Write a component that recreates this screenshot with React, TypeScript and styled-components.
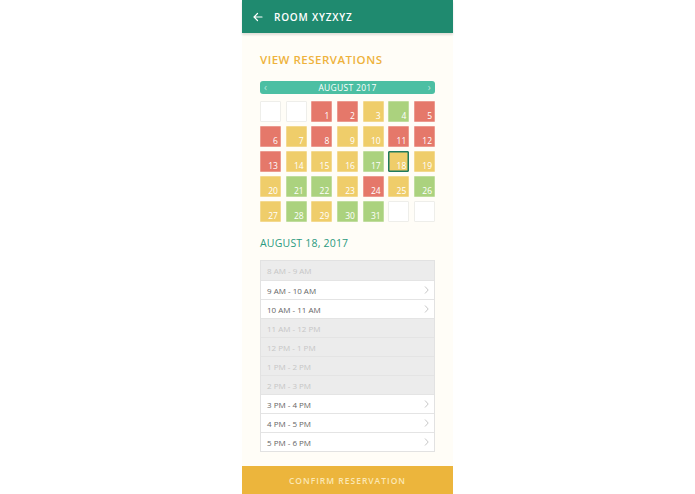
import styled, { createGlobalStyle } from 'styled-components';

const GlobalStyle = createGlobalStyle`
  html, body {
    margin: 0;
    padding: 0;
    background: #ffffff;
    font-family: "Open Sans", "Liberation Sans", sans-serif;
  }
`;

const Page = styled.div`
  display: flex;
  justify-content: center;
  width: 100%;
  height: 494px;
`;

const Phone = styled.div`
  width: 211px;
  height: 494px;
  background: #fffdf7;
  display: flex;
  flex-direction: column;
`;

const Header = styled.div`
  height: 33px;
  flex: none;
  background: #1f8a6f;
  box-shadow: 0 2px 2px rgba(0, 0, 0, 0.12);
  display: flex;
  align-items: center;
  padding-left: 10px;
  gap: 10px;
  color: #ffffff;
`;

const HeaderTitle = styled.span`
  font-size: 10px;
  font-weight: 600;
  letter-spacing: 0.8px;
`;

const Content = styled.div`
  flex: 1;
  padding: 19px 18px 0;
  display: flex;
  flex-direction: column;
`;

const Title = styled.div`
  color: #eeb23c;
  font-size: 11.5px;
  font-weight: 600;
  letter-spacing: 0.5px;
  line-height: 16px;
`;

const MonthBar = styled.div`
  margin-top: 13px;
  height: 13px;
  border-radius: 3px;
  background: #4cbfa3;
  color: #ffffff;
  display: flex;
  align-items: center;
  justify-content: space-between;
  padding: 0 4px;
  font-size: 8.5px;
  letter-spacing: 0.3px;
`;

const Arrow = styled.span`
  color: rgba(255, 255, 255, 0.6);
  font-size: 10px;
  line-height: 13px;
`;

const Grid = styled.div`
  margin-top: 7px;
  display: grid;
  grid-template-columns: repeat(7, 1fr);
  grid-auto-rows: 21px;
  column-gap: 4.7px;
  row-gap: 4px;
`;

const palette = {
  r: '#e5786a',
  y: '#efcd6a',
  g: '#abd27e',
  e: '#ffffff',
};

type Kind = keyof typeof palette;

const Cell = styled.div<{ $kind: Kind; $selected?: boolean }>`
  background: ${(p) => palette[p.$kind]};
  border: 1px solid ${(p) => (p.$selected ? '#1f7a5e' : p.$kind === 'e' ? '#eeeeea' : 'rgba(255,255,255,0.25)')};
  ${(p) => p.$selected && 'box-shadow: inset 0 0 0 0.5px #1f7a5e;'}
  border-radius: 1px;
  display: flex;
  align-items: flex-end;
  justify-content: flex-end;
  padding: 0 2px 0 0;
  color: #ffffff;
  font-size: 8.5px;
  line-height: 11px;
`;

const DateHeading = styled.div`
  margin-top: 14px;
  color: #2b9a80;
  font-size: 10.5px;
  letter-spacing: 0.2px;
  line-height: 14px;
`;

const List = styled.div`
  margin-top: 10px;
  border: 1px solid #e2e2e2;
  display: flex;
  flex-direction: column;
`;

const Slot = styled.div<{ $disabled?: boolean }>`
  height: 19px;
  box-sizing: border-box;
  border-top: 1px solid #e4e4e4;
  background: ${(p) => (p.$disabled ? '#ececec' : '#ffffff')};
  color: ${(p) => (p.$disabled ? '#c6c6c6' : '#666666')};
  font-size: 8px;
  display: flex;
  align-items: center;
  justify-content: space-between;
  padding: 0 5px 0 6px;
  &:first-child {
    border-top: none;
  }
`;

const Chevron = styled.svg`
  width: 5px;
  height: 8px;
`;

const Confirm = styled.button`
  flex: none;
  height: 28px;
  border: none;
  margin: 0;
  background: #ecb53c;
  color: #fbe8b5;
  font-family: "Open Sans", "Liberation Sans", sans-serif;
  font-size: 8.5px;
  font-weight: 600;
  letter-spacing: 1px;
`;

const days: (Kind | null)[] = [
  'r', 'r', 'y', 'g', 'r',
  'r', 'y', 'r', 'y', 'y', 'r', 'r',
  'r', 'y', 'y', 'y', 'g', 'y', 'y',
  'y', 'g', 'g', 'y', 'r', 'y', 'g',
  'y', 'g', 'y', 'g', 'g',
];

const slots = [
  ['8 AM - 9 AM', true],
  ['9 AM - 10 AM', false],
  ['10 AM - 11 AM', false],
  ['11 AM - 12 PM', true],
  ['12 PM - 1 PM', true],
  ['1 PM - 2 PM', true],
  ['2 PM - 3 PM', true],
  ['3 PM - 4 PM', false],
  ['4 PM - 5 PM', false],
  ['5 PM - 6 PM', false],
] as const;

export default function App() {
  return (
    <>
      <GlobalStyle />
      <Page>
        <Phone>
          <Header>
            <svg width="12" height="12" viewBox="0 0 24 24" fill="none" stroke="#fff" strokeWidth="2.4" strokeLinecap="round" strokeLinejoin="round">
              <path d="M20 12H4M11 5l-7 7 7 7" />
            </svg>
            <HeaderTitle>ROOM XYZXYZ</HeaderTitle>
          </Header>
          <Content>
            <Title>VIEW RESERVATIONS</Title>
            <MonthBar>
              <Arrow>‹</Arrow>
              <span>AUGUST 2017</span>
              <Arrow>›</Arrow>
            </MonthBar>
            <Grid>
              <Cell $kind="e" />
              <Cell $kind="e" />
              {days.map((k, i) => (
                <Cell key={i} $kind={k as Kind} $selected={i === 17}>
                  {i + 1}
                </Cell>
              ))}
              <Cell $kind="e" />
              <Cell $kind="e" />
            </Grid>
            <DateHeading>AUGUST 18, 2017</DateHeading>
            <List>
              {slots.map(([label, disabled]) => (
                <Slot key={label} $disabled={disabled}>
                  <span>{label}</span>
                  {!disabled && (
                    <Chevron viewBox="0 0 5 8" fill="none" stroke="#b8b8b8" strokeWidth="0.8">
                      <path d="M1 0.5L4.2 4 1 7.5" />
                    </Chevron>
                  )}
                </Slot>
              ))}
            </List>
          </Content>
          <Confirm>CONFIRM RESERVATION</Confirm>
        </Phone>
      </Page>
    </>
  );
}
